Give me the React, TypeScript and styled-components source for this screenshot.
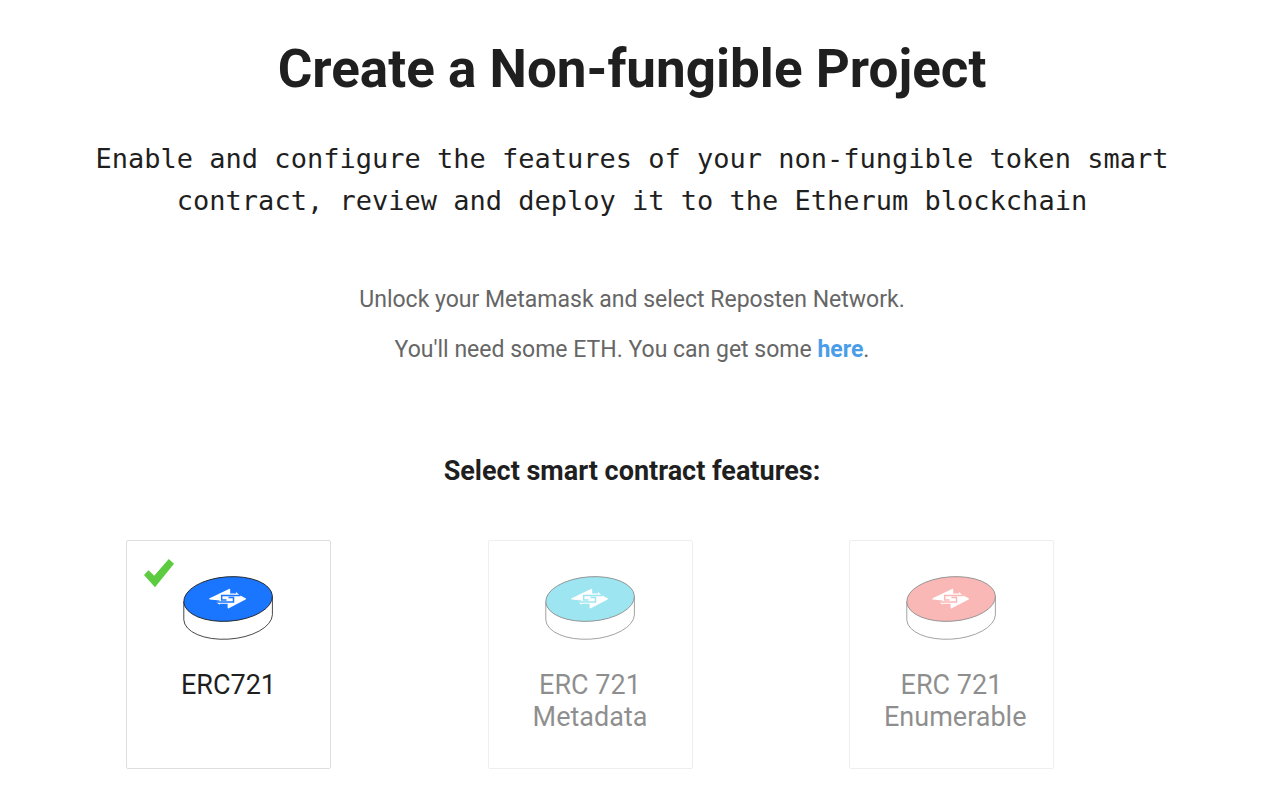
import React, { useId, useState } from "react";
import styled, { createGlobalStyle } from "styled-components";

const GlobalStyle = createGlobalStyle`
  * { box-sizing: border-box; }
  body {
    margin: 0;
    background: #fff;
    color: #1f1f1f;
    font-family: Roboto, "Liberation Sans", sans-serif;
  }
`;

const Page = styled.main`
  padding: 36px 16px 44px 0;
  text-align: center;
`;

const Title = styled.h1`
  margin: 0;
  font-size: 53px;
  line-height: 66px;
  font-weight: 700;
`;

const Lead = styled.p`
  max-width: 1120px;
  margin: 36px auto 0;
  font-family: "DejaVu Sans Mono", "Liberation Mono", monospace;
  font-size: 27px;
  line-height: 42px;
`;

const Notes = styled.div`
  margin-top: 53px;
  color: #666;
  font-size: 23px;
  line-height: 50px;
`;

const Note = styled.p`
  margin: 0;
`;

const NoteLink = styled.a`
  color: #4a9de8;
  font-weight: 700;
  text-decoration: none;
`;

const Form = styled.form`
  margin-top: 80px;
`;

const Features = styled.fieldset`
  margin: 0;
  padding: 0;
  border: 0;
`;

const Legend = styled.legend`
  width: 100%;
  padding: 0;
  font-size: 27px;
  line-height: 32px;
  font-weight: 700;
`;

const Cards = styled.div`
  display: flex;
  justify-content: space-between;
  margin-top: 53px;
  padding: 0 210px 0 126px;
`;

const Card = styled.label<{ $on: boolean }>`
  position: relative;
  display: flex;
  flex-direction: column;
  align-items: center;
  width: 205px;
  min-height: 228px;
  padding: 35px 34px;
  border: 1px solid #dedede;
  border-radius: 2px;
  opacity: ${(p) => (p.$on ? 1 : 0.5)};
  cursor: pointer;
`;

const Tick = styled.input`
  position: absolute;
  inset: 0;
  margin: 0;
  opacity: 0;
  cursor: pointer;
`;

const CheckMark = styled.svg`
  position: absolute;
  top: 18px;
  left: 17px;
`;

const CardName = styled.span`
  width: 100%;
  margin-top: 28px;
  font-size: 27px;
  line-height: 32px;
`;

const Coin = ({ color }: { color: string }) => (
  <svg width="91" height="65" viewBox="0 0 91 65" aria-hidden="true">
    <path
      d="M0.8 25.6V43.8A44.4 22.3 -4.2 0 0 89.4 38.8V20.6"
      fill="#fff"
      stroke="#333"
      strokeWidth="0.9"
    />
    <ellipse
      cx="45.1"
      cy="23"
      rx="44.4"
      ry="22.2"
      transform="rotate(-4.2 45.1 23)"
      fill={color}
      stroke="#222"
      strokeWidth="0.9"
    />
    <path
      d="M26.6 22.3L46 12.9Q47.2 12.5 47.2 13.8V17.4H53V16L56.4 19.1L62.6 22.3Q63.6 22.9 62.6 23.5L45.8 32.3Q44.6 32.7 44.6 31.5V27.8H36.8V28.8L33 26.2L37 24.6L26.6 23.5Q25.6 22.9 26.6 22.3Z"
      fill="#fff"
    />
    <path
      d="M57.5 19.5H38.7V24H43.5M31.5 26H50.5V21.5H45.5"
      fill="none"
      stroke={color}
      strokeWidth="1.5"
    />
  </svg>
);

interface FeatureProps {
  name: string;
  color: string;
  initial?: boolean;
}

const Feature = ({ name, color, initial = false }: FeatureProps) => {
  const id = useId();
  const [on, setOn] = useState(initial);
  return (
    <Card htmlFor={id} $on={on}>
      <Tick id={id} type="checkbox" checked={on} onChange={() => setOn(!on)} />
      {on && (
        <CheckMark width="31" height="29" viewBox="0 0 31 29" aria-hidden="true">
          <path d="M0 16L4.5 11.2L10.2 16.8L24.8 0L30 4.8L11 28.3Z" fill="#5ccb40" />
        </CheckMark>
      )}
      <Coin color={color} />
      <CardName>{name}</CardName>
    </Card>
  );
};

export default function App() {
  return (
    <>
      <GlobalStyle />
      <Page>
        <Title>Create a Non-fungible Project</Title>
        <Lead>
          Enable and configure the features of your non-fungible token smart
          contract, review and deploy it to the Etherum blockchain
        </Lead>
        <Notes>
          <Note>Unlock your Metamask and select Reposten Network.</Note>
          <Note>
            You'll need some ETH. You can get some <NoteLink href="#faucet">here</NoteLink>.
          </Note>
        </Notes>
        <Form>
          <Features>
            <Legend>Select smart contract features:</Legend>
            <Cards>
              <Feature name="ERC721" color="#1a75ff" initial />
              <Feature name="ERC 721 Metadata" color="#3dcde4" />
              <Feature name="ERC 721 Enumerable" color="#f5736f" />
            </Cards>
          </Features>
        </Form>
      </Page>
    </>
  );
}
